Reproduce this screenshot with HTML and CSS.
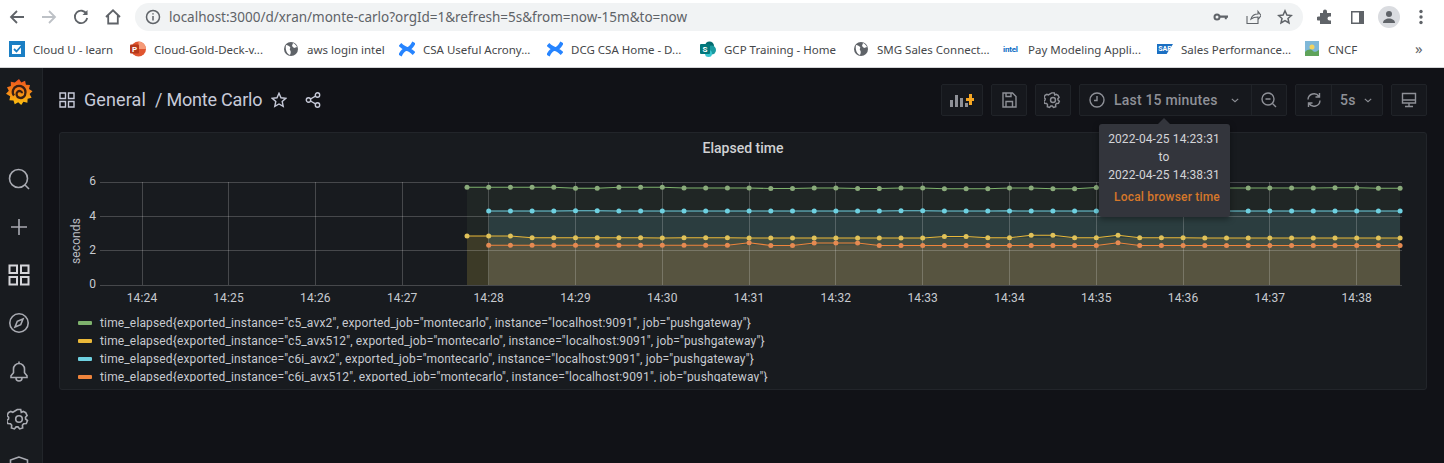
FILE: index.html
```html
<!DOCTYPE html>
<html lang="en">
<head>
<meta charset="utf-8">
<title>Monte Carlo - Grafana</title>
<link rel="stylesheet" href="styles.css">
</head>
<body>
<div class="page">
  <div class="browser-bar">
    <button class="nav-btn"><svg viewBox="0 0 16 16" width="16" height="16"><path d="M15 8H2M8 2 2 8l6 6" class="ic-dark"/></svg></button>
    <button class="nav-btn"><svg viewBox="0 0 16 16" width="16" height="16"><path d="M1 8h13M8 2l6 6-6 6" class="ic-faint"/></svg></button>
    <button class="nav-btn"><svg viewBox="0 0 16 16" width="16" height="16"><path d="M13.6 5A6.2 6.2 0 1 0 14.2 9" class="ic-dark"/><path d="M14.5 1v5h-5z" class="ic-fill"/></svg></button>
    <button class="nav-btn"><svg viewBox="0 0 16 16" width="16" height="16"><path d="M1 8 8 1.3 15 8M3.2 6.5V14.500h9.600V6.500" class="ic-dark"/></svg></button>
    <div class="url-pill">
      <svg class="url-info" viewBox="0 0 16 16" width="16" height="16"><circle cx="8" cy="8" r="6.500" class="ic-thin"/><path d="M8 7v4.500M8 4.200v1.300" class="ic-thin"/></svg>
      <span class="url-text">localhost:3000/d/xran/monte-carlo?orgId=1&amp;refresh=5s&amp;from=now-15m&amp;to=now</span>
      <div class="url-actions">
        <svg viewBox="0 0 16 16" width="16" height="16"><circle cx="4" cy="8" r="2.500" class="ic-key"/><path d="M6.500 6.500h8.500v2.200h-1.200v1.500h-2V8.700H6.500z" class="ic-fill"/></svg>
        <svg viewBox="0 0 16 16" width="16" height="16"><path d="M2 7v7.500h11V11M6 10c1-3.500 3.500-5 7-5V2.500l3 4-3 4V8c-3 0-5 .5-7 2z" class="ic-share"/></svg>
        <svg viewBox="0 0 16 16" width="16" height="16"><path d="m8 1.800 1.900 4.200 4.500.5-3.400 3 1 4.500L8 11.700 4 14l1-4.500-3.400-3 4.500-.5z" class="ic-thin"/></svg>
      </div>
    </div>
    <button class="nav-btn"><svg viewBox="0 0 16 16" width="16" height="16"><path d="M6 2.500a2 2 0 0 1 4 0V4h4v3.500h-1.500a2 2 0 0 0 0 4H14V15H3v-3.500H1.500a2 2 0 0 1 0-4H3V4h3z" class="ic-solid"/></svg></button>
    <button class="nav-btn"><svg viewBox="0 0 16 16" width="16" height="16"><path d="M2 2h13v13H2zM3.500 3.500v10H10v-10z" class="ic-solid ic-evenodd"/></svg></button>
    <button class="nav-btn"><span class="avatar"><svg viewBox="0 0 16 16" width="16" height="16"><circle cx="8" cy="5" r="3" class="ic-avatar"/><path d="M2 14c0-3 3-4.500 6-4.500s6 1.500 6 4.500z" class="ic-avatar"/></svg></span></button>
    <button class="nav-btn"><svg viewBox="0 0 16 16" width="16" height="16"><circle cx="8" cy="2.500" r="1.700" class="ic-solid"/><circle cx="8" cy="8" r="1.700" class="ic-solid"/><circle cx="8" cy="13.500" r="1.700" class="ic-solid"/></svg></button>
  </div>

  <div class="bookmarks">
    <div class="bm"><svg viewBox="0 0 16 16" width="16" height="16"><rect width="16" height="16" y="0" fill="#1b7fc4"/><rect x="3" y="4" width="9" height="9" fill="#fff"/><path d="m5 8 2.500 2.500L14 3" class="bm-check"/></svg><span>Cloud U - learn</span></div>
    <div class="bm"><svg viewBox="0 0 16 16" width="16" height="16"><circle cx="8.500" cy="8" r="7.500" fill="#e0552f"/><path d="M8.500 .5a7.500 7.500 0 0 1 7.500 7.500H8.500z" fill="#f59a77"/><rect x="0" y="3.500" width="9" height="9" rx="1" fill="#b8391a"/><text x="4.500" y="10.800" class="bm-p">P</text></svg><span>Cloud-Gold-Deck-v...</span></div>
    <div class="bm"><svg viewBox="0 0 16 16" width="16" height="16"><circle cx="8" cy="8" r="7" fill="#5f6368"/><path d="M3 4c2 0 3 1 4 2s-1 2 0 3 1 3 0 5C4 13 2 9 3 4zM10 2c2 1 3 2 4 4l-3 1-2-2z" fill="#fff"/></svg><span>aws login intel</span></div>
    <div class="bm"><svg viewBox="0 0 16 16" width="16" height="16"><path d="M1 14.500C5 7 8 6 15 12.500M15 1.500C11 9 8 10 1 3.500" class="bm-conf"/></svg><span>CSA Useful Acrony...</span></div>
    <div class="bm"><svg viewBox="0 0 16 16" width="16" height="16"><path d="M1 14.500C5 7 8 6 15 12.500M15 1.500C11 9 8 10 1 3.500" class="bm-conf"/></svg><span>DCG CSA Home - D...</span></div>
    <div class="bm"><svg viewBox="0 0 16 16" width="16" height="16"><circle cx="9.500" cy="5" r="4.500" fill="#036c70"/><circle cx="11.500" cy="9" r="4.500" fill="#1a9ba1"/><circle cx="8.500" cy="12.500" r="3.500" fill="#37c6d0"/><rect x="0" y="3" width="10" height="10" rx="1" fill="#03787c"/><text x="5" y="11" class="bm-s">S</text></svg><span>GCP Training - Home</span></div>
    <div class="bm"><svg viewBox="0 0 16 16" width="16" height="16"><circle cx="8" cy="8" r="7" fill="#5f6368"/><path d="M3 4c2 0 3 1 4 2s-1 2 0 3 1 3 0 5C4 13 2 9 3 4zM10 2c2 1 3 2 4 4l-3 1-2-2z" fill="#fff"/></svg><span>SMG Sales Connect...</span></div>
    <div class="bm"><i class="intel">intel</i><span>Pay Modeling Appli...</span></div>
    <div class="bm"><i class="sap">SAP</i><span>Sales Performance...</span></div>
    <div class="bm"><svg viewBox="0 0 16 16" width="16" height="16"><rect x="1" y="0" width="14" height="15" fill="#7fb8d8"/><circle cx="8" cy="6" r="2.500" fill="#f4d35e"/><path d="M1 11c3-3 6-3 8-1s4 0 6-1v6H1z" fill="#5fa35a"/></svg><span>CNCF</span></div>
    <div class="bm-more">»</div>
  </div>

  <div class="app">
    <aside class="sidebar">
      <div class="logo">
        <svg viewBox="0 0 28 28" width="28" height="28">
          <defs><linearGradient id="gf" x1="0" y1="1" x2="0" y2="0"><stop offset="0" stop-color="#fcc20f"/><stop offset="1" stop-color="#f0501f"/></linearGradient></defs>
          <path d="M14 1l2.300 3.400 3.800-1.600.8 4 4.100.2-1 4 3.500 2.200-2.900 2.900 2 3.600-4 1-.2 4.100-4-1-2.200 3.200-3-2.700-3.500 2-1.200-3.900-4.100-.2.800-4L1 15.800l2.800-3L2 9.200l3.900-1.300L5.800 3.800l4 .8z" fill="url(#gf)"/>
          <path d="M9 17.500c-2.500-3-1-8 3-9.300s8.500 1.500 8.500 6-3.500 6.500-6.300 5.500-3.500-4.500-1.500-6 4.300-.2 4.300 1.500" class="logo-spiral"/>
        </svg>
      </div>
      <nav class="side-nav">
        <svg viewBox="0 0 24 24" width="24" height="24"><circle cx="11.500" cy="11.500" r="9" class="side-ic"/><path d="m18 18 4 4" class="side-ic"/></svg>
        <svg viewBox="0 0 24 24" width="24" height="24"><path d="M12 4v16M4 12h16" class="side-ic"/></svg>
        <svg viewBox="0 0 24 24" width="24" height="24"><path d="M2.500 2.500h7.500v7.500H2.500zM14 2.500h7.500v7.500H14zM2.500 14h7.500v7.500H2.500zM14 14h7.500v7.500H14z" class="side-ic side-strong"/></svg>
        <svg viewBox="0 0 24 24" width="24" height="24"><circle cx="12" cy="12" r="9.200" class="side-ic"/><path d="m16 8-2.300 5.700L8 16l2.300-5.700z" class="side-ic"/></svg>
        <svg viewBox="0 0 24 24" width="24" height="24"><path d="M4 18.500h16v-1.700l-2.500-3V10a5.500 5.500 0 0 0-11 0v3.800L4 16.800zM12 4.500V2.500M9 18.500v.5a3 3 0 0 0 6 0v-.5" class="side-ic"/></svg>
        <svg viewBox="0 0 24 24" width="24" height="24"><circle cx="12" cy="12" r="3.300" class="side-ic"/><path d="M10.300 2.500h3.400l.6 2.800 2-.9 2.400 1.300 1.400 2.900-1.600 1.600.1 1.800 1.900 1.500-1.200 3-2.700.2-1.200 1.500.3 2.700-3 1-1.700-2h-1.900l-1.700 2-3-1 .3-2.700-1.200-1.500-2.700-.2-1.200-3 1.900-1.500.1-1.800-1.600-1.600 1.400-2.900 2.400-1.300 2 .9z" class="side-ic"/></svg>
        <svg viewBox="0 0 24 24" width="24" height="24"><path d="M12 2 3.500 5v7c0 5 3.500 8 8.500 10 5-2 8.500-5 8.500-10V5z" class="side-ic"/></svg>
      </nav>
    </aside>

    <main class="main">
      <header class="dash-head">
        <div class="crumbs">
          <svg viewBox="0 0 16 16" width="16" height="16"><path d="M1 1h5.500v5.500H1zM9.500 1H15v5.500H9.500zM1 9.500h5.500V15H1zM9.500 9.500H15V15H9.500z" class="head-ic"/></svg>
          <span class="crumb-a">General</span>
          <span class="crumb-b">/ Monte Carlo</span>
          <svg class="crumb-star" viewBox="0 0 16 16" width="16" height="16"><path d="m8 1.300 2 4.500 4.800.5-3.600 3.200 1 4.800L8 12l-4.200 2.300 1-4.800L1.200 6.300 6 5.800z" class="head-ic"/></svg>
          <svg class="crumb-share" viewBox="0 0 16 16" width="16" height="16"><circle cx="3.500" cy="8" r="2.200" class="head-ic"/><circle cx="12.500" cy="3" r="2.200" class="head-ic"/><circle cx="12.500" cy="13" r="2.200" class="head-ic"/><path d="m5.500 7 5-2.900M5.500 9l5 2.900" class="head-ic"/></svg>
        </div>
        <div class="tools">
          <button class="tool tool-add"><svg viewBox="0 0 26 16" width="26" height="16"><path d="M1 15V8h3v7zM6 15V3h3v12zM11 15V6h3v9zM16 15v-4h3v4z" fill="#8e9097"/><path d="M21 2h3v4h2v3h-2v4h-3V9h-3V6h3z" fill="#f5a623" transform="translate(-1 0)"/></svg></button>
          <button class="tool"><svg viewBox="0 0 16 16" width="16" height="16"><path d="M2 1h9.500L15 4.500V15H2zM5 15V9.500h6.500V15M5 1v3.500h5V1" class="tool-ic"/></svg></button>
          <button class="tool"><svg viewBox="0 0 24 24" width="18" height="18"><circle cx="12" cy="12" r="3.300" class="tool-ic tool-ic-lg"/><path d="M10.300 2.500h3.400l.6 2.800 2-.9 2.400 1.300 1.400 2.900-1.600 1.600.1 1.800 1.900 1.500-1.200 3-2.700.2-1.200 1.500.3 2.700-3 1-1.700-2h-1.900l-1.700 2-3-1 .3-2.700-1.200-1.500-2.700-.2-1.200-3 1.900-1.500.1-1.800-1.600-1.600 1.400-2.900 2.400-1.300 2 .9z" class="tool-ic tool-ic-lg"/></svg></button>
          <div class="group">
            <button class="tool-seg seg-time">
              <svg viewBox="0 0 16 16" width="16" height="16"><circle cx="8" cy="8" r="7" class="tool-ic"/><path d="M8 4v4.500H5" class="tool-ic"/></svg>
              <span class="seg-label">Last 15 minutes</span>
              <svg class="seg-chev" viewBox="0 0 10 6" width="8" height="5"><path d="m1 1 4 3.500L9 1" class="tool-ic"/></svg>
            </button>
            <button class="tool-seg seg-zoom"><svg viewBox="0 0 16 16" width="16" height="16"><circle cx="7" cy="7" r="6" class="tool-ic"/><path d="M4.500 7h5M11.500 11.500 15 15" class="tool-ic"/></svg></button>
          </div>
          <div class="group">
            <button class="tool-seg seg-refresh"><svg viewBox="0 0 16 16" width="16" height="16"><path d="M2 7.500A6 6 0 0 1 13 4.500M14 8.500A6 6 0 0 1 3 11.500M13.500 1v4h-4M2.500 15v-4h4" class="tool-ic"/></svg></button>
            <button class="tool-seg seg-int"><span class="seg-label">5s</span><svg viewBox="0 0 10 6" width="8" height="5"><path d="m1 1 4 3.500L9 1" class="tool-ic"/></svg></button>
          </div>
          <button class="tool"><svg viewBox="0 0 16 16" width="16" height="16"><path d="M1.500 1.500h13v9.500h-13zM1.500 8h13M4 14.500h8M8 11v3.500" class="tool-ic"/></svg></button>
        </div>
      </header>

      <section class="panel">
        <h2 class="panel-title">Elapsed time</h2>
        <svg class="chart" viewBox="60 158 1366 150" width="1366" height="150">
          <defs>
            <marker id="mg" markerUnits="userSpaceOnUse" markerWidth="6" markerHeight="6" refX="3" refY="3"><circle cx="3" cy="3" r="2.500" fill="#8aab7b"/></marker>
            <marker id="my" markerUnits="userSpaceOnUse" markerWidth="6" markerHeight="6" refX="3" refY="3"><circle cx="3" cy="3" r="2.500" fill="#e0c25a"/></marker>
            <marker id="mc" markerUnits="userSpaceOnUse" markerWidth="6" markerHeight="6" refX="3" refY="3"><circle cx="3" cy="3" r="2.500" fill="#6ed0e0"/></marker>
            <marker id="mo" markerUnits="userSpaceOnUse" markerWidth="6" markerHeight="6" refX="3" refY="3"><circle cx="3" cy="3" r="2.500" fill="#e58a52"/></marker>
          </defs>
          <g class="areas">
            <path class="a-g" d="M467 187.300L1400.100 188.300V285H467z"/>
            <path class="a-y" d="M467 236L510.400 236 532.100 237.700 1400.100 238V285H467z"/>
            <path class="a-c" d="M488.700 211H1400.100V285H488.700z"/>
            <path class="a-o" d="M488.700 245.300H1400.100V285H488.700z"/>
          </g>
          <g class="grid">
            <path d="M100 182H1402M100 216H1402M100 250H1402M100 285H1402"/>
            <path d="M142 182V285M228.500 182V285M315.400 182V285M402.200 182V285M488.700 182V285M575.500 182V285M662.300 182V285M749.100 182V285M835.900 182V285M922.700 182V285M1009.500 182V285M1096.300 182V285M1183.100 182V285M1269.900 182V285M1356.700 182V285"/>
          </g>
          <polyline class="ln ln-g" points="467,187.300 488.700,187.300 510.400,187.300 532.100,187.300 553.800,187.300 575.500,188.200 597.200,188.200 618.900,187.300 640.600,187.300 662.300,187.300 684,188 705.700,188 727.400,188 749.100,188 770.800,188.500 792.500,188.500 814.200,188 835.900,188 857.600,188.500 879.300,188.500 901,188 922.700,188 944.400,188.800 966.100,188.800 987.800,188.800 1009.500,188 1031.200,188 1052.900,188.800 1074.600,188.800 1096.300,187.500 1118,188 1139.700,188 1161.400,188 1183.100,188 1204.800,188 1226.500,188 1248.200,188 1269.900,188 1291.600,188 1313.300,188 1335,187.700 1356.700,187.700 1378.400,188.300 1400.100,188.300"/>
          <polyline class="ln ln-c" points="488.700,211 510.400,211 532.100,211 553.800,211 575.500,210.700 597.200,210.700 618.900,211 640.600,211 662.300,211 684,211 705.700,211 727.400,211 749.100,211 770.800,211 792.500,211 814.200,211 835.900,211 857.600,211 879.300,211 901,210.800 922.700,210.800 944.400,211 966.100,211 987.800,211 1009.500,210.900 1031.200,211 1052.900,211 1074.600,211 1096.300,211 1118,211 1139.700,211 1161.400,211 1183.100,211 1204.800,211 1226.500,211 1248.200,211 1269.900,211 1291.600,211 1313.300,211 1335,211 1356.700,211 1378.400,211 1400.100,211"/>
          <polyline class="ln ln-y" points="467,236 488.700,236 510.400,236 532.100,237.700 553.800,237.700 575.500,237.700 597.200,237.700 618.900,237.700 640.600,237.700 662.300,238 684,237.700 705.700,237.700 727.400,237.700 749.100,238 770.800,238 792.500,238 814.200,238 835.900,238 857.600,238 879.300,238 901,238 922.700,238 944.400,236.500 966.100,236.500 987.800,237.700 1009.500,237.700 1031.200,235.300 1052.900,235.300 1074.600,237.700 1096.300,237.700 1118,235.300 1139.700,237.700 1161.400,237.700 1183.100,237.700 1204.800,238 1226.500,238 1248.200,238 1269.900,238 1291.600,238 1313.300,238 1335,238 1356.700,238 1378.400,238 1400.100,238"/>
          <polyline class="ln ln-o" points="488.700,245.300 510.400,245.300 532.100,245.300 553.800,245.300 575.500,245.300 597.200,245.300 618.900,245.300 640.600,245.300 662.300,245.300 684,245.300 705.700,245.300 727.400,245.300 749.100,242.700 770.800,245.500 792.500,245.500 814.200,243 835.900,243 857.600,243 879.300,245.500 901,245.500 922.700,245.500 944.400,245.500 966.100,245.500 987.800,245.500 1009.500,245.500 1031.200,245.500 1052.900,245.500 1074.600,245.500 1096.300,245.500 1118,242.700 1139.700,245.500 1161.400,245.500 1183.100,245.500 1204.800,245.500 1226.500,245.500 1248.200,245.500 1269.900,245.500 1291.600,245.500 1313.300,245.500 1335,245.500 1356.700,245.500 1378.400,245.500 1400.100,245.500"/>
          <g class="y-labels">
            <text x="96" y="185">6</text><text x="96" y="220">4</text><text x="96" y="254">2</text><text x="96" y="288">0</text>
          </g>
          <text class="y-title" transform="translate(80 241) rotate(-90)">seconds</text>
          <g class="x-labels">
            <text x="142" y="302">14:24</text><text x="228.500" y="302">14:25</text><text x="315.400" y="302">14:26</text><text x="402.200" y="302">14:27</text><text x="488.700" y="302">14:28</text><text x="575.500" y="302">14:29</text><text x="662.300" y="302">14:30</text><text x="749.100" y="302">14:31</text><text x="835.900" y="302">14:32</text><text x="922.700" y="302">14:33</text><text x="1009.500" y="302">14:34</text><text x="1096.300" y="302">14:35</text><text x="1183.100" y="302">14:36</text><text x="1269.900" y="302">14:37</text><text x="1356.700" y="302">14:38</text>
          </g>
        </svg>
        <ul class="legend">
          <li><i class="sw sw-g"></i>time_elapsed{exported_instance="c5_avx2", exported_job="montecarlo", instance="localhost:9091", job="pushgateway"}</li>
          <li><i class="sw sw-y"></i>time_elapsed{exported_instance="c5_avx512", exported_job="montecarlo", instance="localhost:9091", job="pushgateway"}</li>
          <li><i class="sw sw-c"></i>time_elapsed{exported_instance="c6i_avx2", exported_job="montecarlo", instance="localhost:9091", job="pushgateway"}</li>
          <li><i class="sw sw-o"></i>time_elapsed{exported_instance="c6i_avx512", exported_job="montecarlo", instance="localhost:9091", job="pushgateway"}</li>
        </ul>
      </section>
    </main>
  </div>

  <div class="tooltip">
    <div class="tip-inner">
      <div class="tip-line">2022-04-25 14:23:31</div>
      <div class="tip-line">to</div>
      <div class="tip-line">2022-04-25 14:38:31</div>
      <div class="tip-zone">Local browser time</div>
    </div>
  </div>
</div>
</body>
</html>
```
FILE: styles.css
```css
* { box-sizing: border-box; }
html, body { margin: 0; padding: 0; }
body { background: #111217; font-family: Roboto, sans-serif; }
button { font: inherit; background: none; border: 0; padding: 0; color: inherit; }
svg { display: block; flex: none; }

.page { position: relative; width: 1444px; height: 463px; overflow: hidden; display: flex; flex-direction: column; }

/* browser chrome */
.browser-bar { height: 34px; background: #fff; display: flex; align-items: center; padding-left: 1px; flex: none; }
.nav-btn { width: 32px; height: 34px; display: flex; align-items: center; justify-content: center; flex: none; }
.url-pill { width: 1168px; height: 28px; margin: 0 6px; background: #f1f3f4; border-radius: 14px; display: flex; align-items: center; padding-left: 10px; }
.url-text { margin-left: 8px; font: 13.5px/28px "Noto Sans", sans-serif; color: #5f6368; white-space: nowrap; letter-spacing: -.01px; }
.url-actions { margin-left: auto; display: flex; gap: 16px; padding-right: 10px; }
.ic-dark { fill: none; stroke: #5f6368; stroke-width: 1.8; }
.ic-faint { fill: none; stroke: #bdc1c6; stroke-width: 1.8; }
.ic-fill { fill: #5f6368; }
.ic-thin { fill: none; stroke: #5f6368; stroke-width: 1.5; }
.ic-key { fill: none; stroke: #5f6368; stroke-width: 2; }
.ic-share { fill: none; stroke: #5f6368; stroke-width: 1.1; }
.ic-solid { fill: #5f6368; }
.ic-evenodd { fill-rule: evenodd; }
.ic-avatar { fill: #5f6368; }
.avatar { width: 22px; height: 22px; border-radius: 50%; background: #dadce0; display: flex; align-items: center; justify-content: center; }

.bookmarks { height: 34px; flex: none; background: #fff; border-bottom: 1px solid #d4d5d7; padding: 0 0 3px 9px; display: grid; grid-template-columns: 121px 153px 116px 148px 153px 153px 150px 154px 147px 111px auto; align-items: center; font: 11.5px "Noto Sans", sans-serif; color: #45474a; }
.bm { display: flex; align-items: center; gap: 8px; white-space: nowrap; }
.bm-more { font-size: 15px; line-height: 16px; margin-top: -3px; color: #5f6368; }
.bm-check { fill: none; stroke: #1b7fc4; stroke-width: 1.8; }
.bm-p { font: bold 8px Roboto, sans-serif; fill: #fff; text-anchor: middle; }
.bm-s { font: bold 8px Roboto, sans-serif; fill: #fff; text-anchor: middle; }
.bm-conf { fill: none; stroke: #2684ff; stroke-width: 3.8; }
.intel { width: 16px; font: bold 8px Roboto, sans-serif; color: #0d6dc4; font-style: normal; letter-spacing: -.2px; margin-right: 1px; }
.sap { width: 16px; height: 10px; background: #1b6fc2; color: #fff; font: bold 7px/10px Roboto, sans-serif; font-style: normal; text-align: center; clip-path: polygon(0 0, 100% 0, 60% 100%, 0 100%); }

/* app */
.app { flex: 1; display: flex; min-height: 0; }
.sidebar { width: 43px; flex: none; background: #181b1f; border-right: 1px solid #22252a; display: flex; flex-direction: column; align-items: center; padding: 10px 8px 0 3px; }
.logo { height: 28px; }
.logo-spiral { fill: none; stroke: #3a1f14; stroke-width: 2.300; }
.side-nav { margin-top: 61px; display: flex; flex-direction: column; gap: 24px; }
.side-ic { fill: none; stroke: #a9abb2; stroke-width: 1.6; }
.side-strong { stroke: #d5d6da; stroke-width: 2; }

.main { flex: 1; min-width: 0; padding: 0 17px 0 16px; }
.dash-head { height: 64px; padding-top: 16px; display: flex; justify-content: space-between; align-items: flex-start; }
.crumbs { height: 32px; display: flex; align-items: center; color: #c7cad9; font-size: 18px; }
.head-ic { fill: none; stroke: #c7cad9; stroke-width: 1.4; }
.crumb-a { margin: -2px 0 0 9px; letter-spacing: .1px; }
.crumb-b { margin: -2px 0 0 9px; letter-spacing: -.2px; }
.crumb-star { margin-left: 9px; }
.crumb-share { margin-left: 18px; }

.tools { display: flex; gap: 8px; }
.tool { width: 36px; height: 32px; background: #16181d; border: 1px solid #202328; border-radius: 2px; display: flex; align-items: center; justify-content: center; }
.tool-add { width: 42px; }
.tool-ic { fill: none; stroke: #8e9097; stroke-width: 1.4; }
.tool-ic-lg { stroke-width: 1.900; }
.group { display: flex; height: 32px; background: #16181d; border: 1px solid #202328; border-radius: 2px; }
.tool-seg { height: 30px; display: flex; align-items: center; color: #8e9097; }
.tool-seg + .tool-seg { border-left: 1px solid #202328; }
.seg-time { width: 171px; padding-left: 9px; }
.seg-zoom { width: 35px; justify-content: center; }
.seg-refresh { width: 35px; justify-content: center; }
.seg-int { width: 51px; padding-left: 8px; gap: 8px; }
.seg-label { font-size: 14px; font-weight: 500; letter-spacing: .2px; }
.seg-time .seg-label { margin-left: 9px; }
.seg-chev { margin-left: 13px; }

/* panel */
.panel { height: 258px; background: #181b1f; border: 1px solid #22252a; border-radius: 3px; overflow: hidden; }
.panel-title { margin: 0; height: 25px; font-size: 14px; font-weight: 500; line-height: 30px; text-align: center; color: #d0d1d3; }
.chart { overflow: hidden; }
.a-g { fill: #7eb26d; fill-opacity: .08; }
.a-y { fill: #eab839; fill-opacity: .14; }
.a-c { fill: #6ed0e0; fill-opacity: .14; }
.a-o { fill: #ef843c; fill-opacity: .12; }
.grid path { fill: none; stroke: #fff; stroke-opacity: .2; stroke-width: 1; shape-rendering: crispEdges; }
.ln { fill: none; stroke-width: 1.1; }
.ln-g { stroke: #7eb26d; marker-start: url(#mg); marker-mid: url(#mg); marker-end: url(#mg); }
.ln-y { stroke: #eab839; marker-start: url(#my); marker-mid: url(#my); marker-end: url(#my); }
.ln-c { stroke: #6ed0e0; marker-start: url(#mc); marker-mid: url(#mc); marker-end: url(#mc); }
.ln-o { stroke: #ef843c; marker-start: url(#mo); marker-mid: url(#mo); marker-end: url(#mo); }
.y-labels text { font-size: 12px; fill: #c7cad0; text-anchor: end; }
.x-labels text { font-size: 12px; fill: #c7cad0; text-anchor: middle; letter-spacing: .15px; }
.y-title { font-size: 12px; fill: #b8bbc1; text-anchor: middle; letter-spacing: .1px; }

.legend { list-style: none; margin: 6px 0 0; padding: 0 0 0 18px; height: 68px; overflow: hidden; font-size: 12px; letter-spacing: .145px; color: #c7cad0; }
.legend li { height: 18px; line-height: 18px; display: flex; align-items: center; white-space: nowrap; }
.sw { width: 14px; height: 4px; margin-right: 8px; flex: none; border-radius: 1px; }
.sw-g { background: #7eb26d; }
.sw-y { background: #eab839; }
.sw-c { background: #6ed0e0; }
.sw-o { background: #ef843c; }

/* tooltip */
.tooltip { position: absolute; left: 1099px; top: 124px; width: 131px; height: 93px; background: #33353c; border-radius: 3px; box-shadow: 0 2px 6px rgba(0, 0, 0, .4); padding: 6px 10px 0 9px; font-size: 12px; letter-spacing: .1px; color: #d3d4d8; }
.tooltip::before { content: ""; position: absolute; left: 59px; top: -6px; border: 6px solid transparent; border-top: 0; border-bottom-color: #33353c; }
.tip-line { line-height: 18px; text-align: center; }
.tip-zone { margin-top: 4px; line-height: 18px; text-align: right; color: #d6772a; font-weight: 500; letter-spacing: .2px; }
```
